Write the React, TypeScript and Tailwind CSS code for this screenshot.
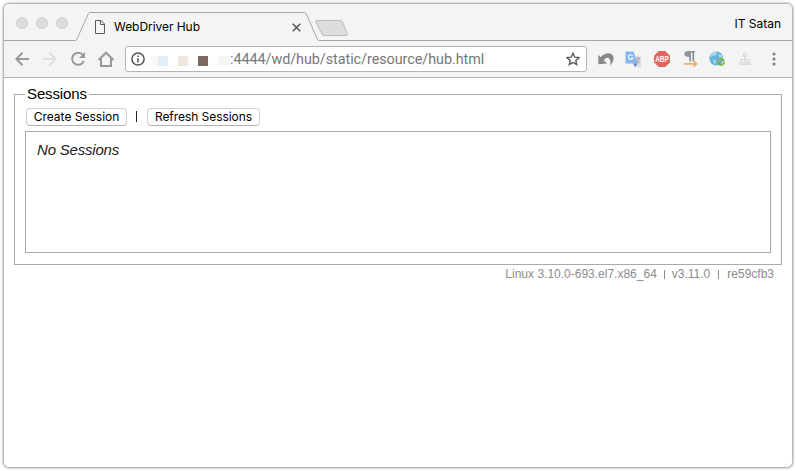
import React from "react";

function TabStrip() {
  return (
    <div className="relative flex h-[37px] shrink-0 items-start">
      <svg className="absolute left-0 top-0" width="788" height="37" viewBox="4 4 788 37" fill="none">
        <path d="M4 40.5H75.5C76.5 40.5 76.5 40 77 39L88 14.5C88.6 13 89 12.5 90 12.5H304.5C305.5 12.5 306 13 306.4 14L317 38.5C317.7 40 318 40.5 319 40.5H792" stroke="#a6a6a6" />
        <path d="M317 20.5H340.5Q342 20.5 342.5 22L347.3 33.5Q348 35.5 346.5 35.5H324Q322.5 35.5 322 34L315.8 22Q315 20.5 317 20.5Z" fill="#dcdcdc" stroke="#bdbdbd" />
      </svg>
      <div className="relative ml-[12px] mt-[13px] flex gap-2">
        <span className="size-3 rounded-full border border-[#d0d0d0] bg-[#dcdcdc]" />
        <span className="size-3 rounded-full border border-[#d0d0d0] bg-[#dcdcdc]" />
        <span className="size-3 rounded-full border border-[#d0d0d0] bg-[#dcdcdc]" />
      </div>
      <svg className="relative ml-[27px] mt-[16px]" width="10" height="14" viewBox="0 0 10 14" fill="none" stroke="#5a5a5a">
        <path d="M.5 .5H6L9.5 4V13.5H.5Z" />
        <path d="M5.5 .5V4.5H9.5" />
      </svg>
      <span className="relative ml-[9px] mt-[14px] w-[178px] whitespace-nowrap font-[Inter,sans-serif] text-[12px] leading-[18px] tracking-[-0.05px] text-black">WebDriver Hub</span>
      <svg className="relative mt-[19px]" width="9" height="9" viewBox="0 0 9 9" stroke="#555" strokeWidth="1.5">
        <path d="M.7 .7L8.3 8.3M8.3 .7L.7 8.3" />
      </svg>
      <span className="relative ml-auto mr-[11px] mt-[11px] whitespace-nowrap font-[Inter,sans-serif] text-[12px] leading-[18px] text-black">IT Satan</span>
    </div>
  );
}

function AddressBar() {
  return (
    <div className="ml-[10px] flex h-[26px] w-[462px] items-center rounded-[3px] border border-[#b4b4b4] bg-white">
      <svg className="ml-[5px]" width="14" height="14" viewBox="0 0 14 14" fill="none" stroke="#555" strokeWidth="1.5">
        <circle cx="7" cy="7" r="6.1" />
        <path d="M7 6.2V10.5M7 3.5V5" />
      </svg>
      <div className="ml-[6px] mt-[4px] flex h-[10px] w-[79px] shrink-0">
        <span className="w-[7px] shrink-0 bg-[#fbf8f3]" />
        <span className="w-[10px] shrink-0 bg-[#e1eef5]" />
        <span className="ml-[10px] w-[10px] shrink-0 bg-[#efe7db]" />
        <span className="w-[10px] shrink-0 bg-[#fdfdfd]" />
        <span className="w-[10px] shrink-0 bg-[#7d685f]" />
        <span className="w-[10px] shrink-0 bg-[#fdfdfc]" />
        <span className="w-[12px] shrink-0 bg-[#f6f6f5]" />
      </div>
      <span className="whitespace-nowrap pt-[2px] font-[Roboto,sans-serif] text-[14.4px] leading-[20px] tracking-[-0.06px] text-[#777]">:4444/wd/hub/static/resource/hub.html</span>
      <svg className="ml-auto mr-[6px]" width="14" height="14" viewBox="0 0 14 14" fill="none" stroke="#5a5a5a" strokeWidth="1.4">
        <path d="M7 1.3L8.7 5.2L13 5.6L9.8 8.4L10.7 12.6L7 10.4L3.3 12.6L4.2 8.4L1 5.6L5.3 5.2Z" />
      </svg>
    </div>
  );
}

function Toolbar() {
  return (
    <div className="flex h-[37px] shrink-0 items-center border-b border-[#b3b3b3]">
      <svg className="ml-[11px]" width="14" height="14" viewBox="0 0 14 14" fill="none" stroke="#9a9a9a" strokeWidth="2">
        <path d="M14 7H1.5M7.5 .8L1.4 7L7.5 13.2" />
      </svg>
      <svg className="ml-[14px]" width="14" height="14" viewBox="0 0 14 14" fill="none" stroke="#e0e0e0" strokeWidth="2">
        <path d="M0 7H12.5M6.5 .8L12.6 7L6.5 13.2" />
      </svg>
      <svg className="ml-[14px]" width="14" height="14" viewBox="0 0 14 14" fill="none">
        <path d="M12 3.3A6 6 0 1 0 12.8 8.8" stroke="#9a9a9a" strokeWidth="2" />
        <path d="M14 0V6H8Z" fill="#9a9a9a" />
      </svg>
      <svg className="ml-[12px]" width="18" height="16" viewBox="0 0 18 16" fill="none" stroke="#9a9a9a" strokeWidth="2">
        <path d="M1.5 9L9 1.7L16.5 9M4 7.5V15H14V7.5" />
      </svg>
      <AddressBar />
      <svg className="ml-[11px]" width="16" height="14" viewBox="0 0 16 14">
        <path d="M.3 2.8L2.6 5.2C6 1.6 9.8 .2 13 1.8C16.8 4 16.3 10 11.8 13.6C13 10.5 12.6 7.4 10.8 6.2C9.2 5.3 7.5 6.2 5.8 8.2L9 11.4L.3 12.2Z" fill="#888" />
      </svg>
      <svg className="ml-[11px]" width="17" height="17" viewBox="0 0 17 17">
        <path d="M6 4.5H16V16H10Z" fill="#dedfe1" />
        <path d="M1.5 .5H8.5L12.5 12.5H1.5Q.5 12.5 .5 11.5V1.5Q.5 .5 1.5 .5Z" fill="#87b5f2" />
        <path d="M8.3 12.5H12.5L10 16Z" fill="#5784d6" />
        <path d="M7.7 4.8A2.3 2.3 0 1 0 7.9 7H6" fill="none" stroke="#fff" strokeWidth="1.1" />
        <path d="M10.8 7.5H15M13 6V7.5M14.2 8Q13.4 11 11.5 12M11.2 8.5L14.5 12.5" fill="none" stroke="#a4a6aa" />
      </svg>
      <svg className="ml-[12px]" width="16" height="16" viewBox="0 0 16 16">
        <path d="M4.7 0H11.3L16 4.7V11.3L11.3 16H4.7L0 11.3V4.7Z" fill="#df665c" />
        <text transform="translate(1.2 11) scale(.8 1)" textLength="17" lengthAdjust="spacingAndGlyphs" fill="#fff" fontFamily="Liberation Sans, sans-serif" fontWeight="700" fontSize="8.5">ABP</text>
      </svg>
      <svg className="ml-[14px]" width="15" height="16" viewBox="0 0 15 16" fill="none">
        <path d="M4 0H11V1.4H10.2V10.5H8.4V1.4H7V10.5H5.2V6C2 6 .3 4.9 .3 3C.3 1 2 0 4 0Z" fill="#8c969b" />
        <path d="M0 12.8H12M9.5 9.8L12.5 12.8L9.5 15.8" stroke="#f4ae60" strokeWidth="1.7" />
      </svg>
      <svg className="ml-[10px]" width="17" height="16" viewBox="0 0 17 16">
        <circle cx="7.3" cy="7.5" r="6.9" fill="#61b1db" />
        <path d="M1.5 4Q4 .5 7.5 .7L8 3L5.5 5L3.5 4.5L2 7ZM9 3L13 4L13.7 7L10 6ZM4 8L7 9L6.5 13L5 12.5Z" fill="#a5dae7" />
        <path d="M9.1 11.6A2.9 2.9 0 0 1 13.8 8.8M14.9 10.4A2.9 2.9 0 0 1 10.4 13.3" fill="none" stroke="#8cba54" strokeWidth="2" />
        <path d="M12.8 6.8L16 9.8L12.2 10.3ZM11.5 15L8.3 12.2L12 11.6Z" fill="#72a946" />
      </svg>
      <svg className="ml-[13px]" width="12" height="13" viewBox="0 0 12 13" fill="none" stroke="#d6d6d6" strokeWidth="1.2">
        <circle cx="6" cy="2.2" r="1.5" />
        <path d="M6 4V10M2 9V6.5H10V9" />
        <path d="M.8 9.5H3.2V11.5H.8ZM4.8 9.5H7.2V11.5H4.8ZM8.8 9.5H11.2V11.5H8.8Z" />
      </svg>
      <svg className="ml-auto mr-[16px]" width="4" height="14" viewBox="0 0 4 14" fill="#858585">
        <circle cx="2" cy="2" r="1.6" />
        <circle cx="2" cy="7" r="1.6" />
        <circle cx="2" cy="12" r="1.6" />
      </svg>
    </div>
  );
}

function PageButton({ children, className }: { children: React.ReactNode; className: string }) {
  return (
    <button className={`h-[18px] shrink-0 whitespace-nowrap rounded-[4px] border border-[#cfcfcf] border-b-[#b5b5b5] bg-white font-[Inter,sans-serif] text-[12px] leading-[14px] text-black ${className}`}>
      {children}
    </button>
  );
}

export default function App() {
  return (
    <div className="h-[471px] w-[796px] overflow-hidden bg-white p-[3px]">
      <div className="flex h-[465px] w-[790px] flex-col overflow-hidden rounded-[6px] border border-[#b5b5b5] bg-white shadow-[0_0_3px_rgba(0,0,0,0.35)]">
        <div className="bg-[#f4f4f4]">
          <TabStrip />
          <Toolbar />
        </div>
        <main className="px-[10px] pt-[7px] font-['Liberation_Sans',sans-serif]">
          <fieldset className="h-[180px] w-[768px] border border-[#a9a9a9] px-[10px]">
            <legend className="ml-0 h-[18px] w-[64px] whitespace-nowrap px-[2px] text-[15px] leading-[18px] tracking-[-0.12px] text-black">Sessions</legend>
            <div className="mt-[5px] flex h-[18px] items-center pl-px">
              <PageButton className="w-[101px]">Create Session</PageButton>
              <span className="-mt-[2px] ml-[9px] h-[11px] w-px bg-[#222]" />
              <PageButton className="ml-[10px] w-[113px] tracking-[-0.05px]">Refresh Sessions</PageButton>
            </div>
            <div className="mt-[5px] h-[122px] w-[746px] border border-[#a9a9a9] pl-[11px] pt-[9px] text-[15px] italic leading-[18px] tracking-[-0.2px] text-[#222]">No Sessions</div>
          </fieldset>
          <footer className="flex h-[17px] w-[760px] items-center justify-end whitespace-nowrap pt-px text-[12px] leading-[17px] text-[#8c8c8c]">
            <span>Linux 3.10.0-693.el7.x86_64</span>
            <span className="mx-[7px] h-[9px] w-px bg-[#8c8c8c]" />
            <span>v3.11.0</span>
            <span className="mx-[8px] h-[9px] w-px bg-[#8c8c8c]" />
            <span>re59cfb3</span>
          </footer>
        </main>
      </div>
    </div>
  );
}
